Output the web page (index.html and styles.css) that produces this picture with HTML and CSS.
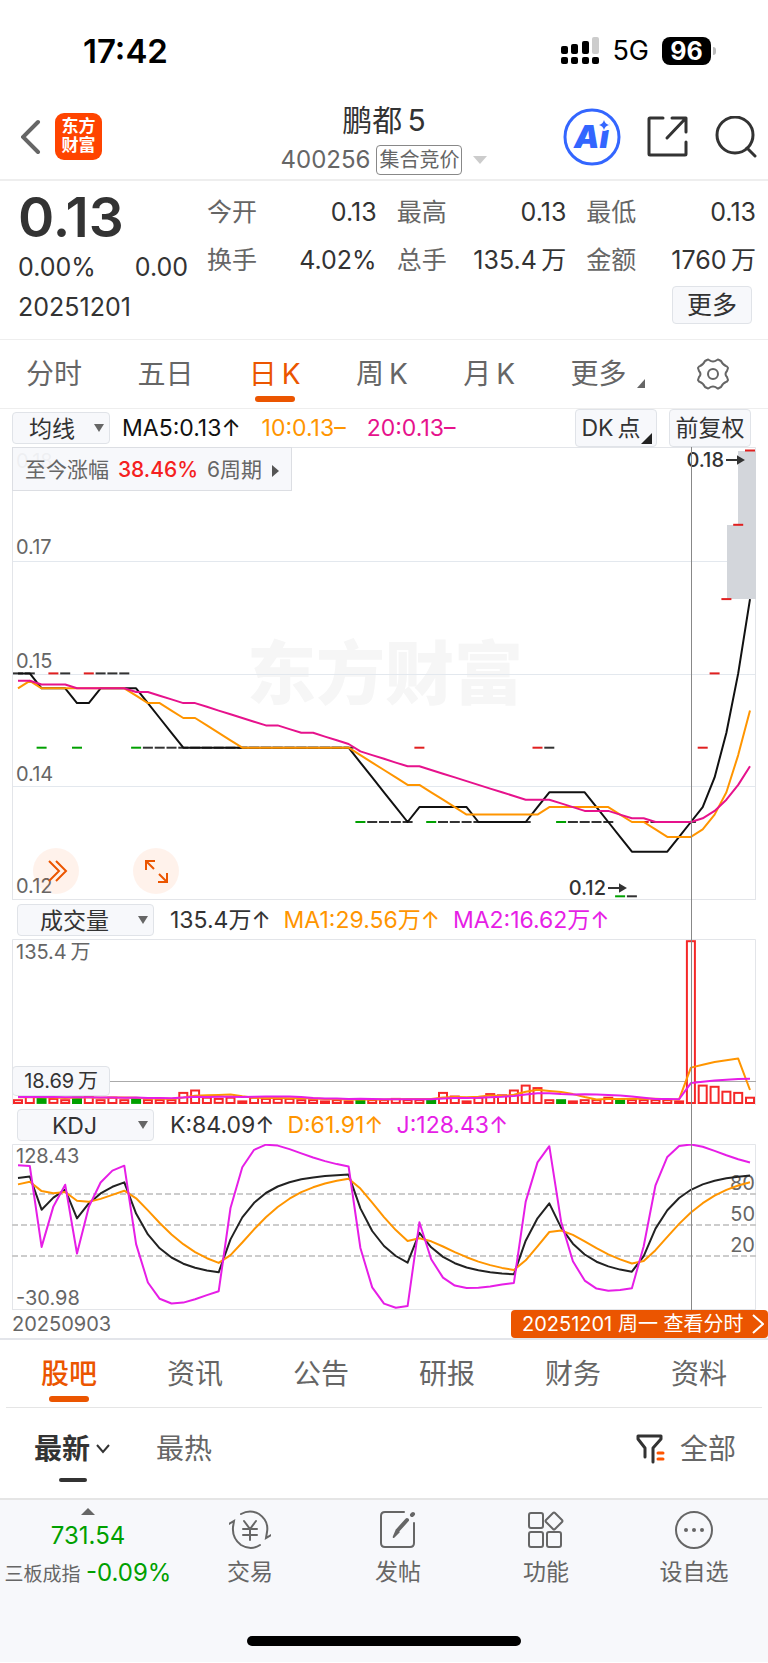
FILE: index.html
```
<!DOCTYPE html>
<html lang="zh-CN">
<head>
  <meta charset="UTF-8">
  <meta name="viewport" content="width=device-width, initial-scale=1">
  <title>鹏都5 400256</title>
  <link rel="stylesheet" href="styles.css">
</head>
<body>

  <div class="status-bar">
    <span class="clock">17:42</span>
    <div class="status-right">
      <svg class="signal" width="40" height="28" viewBox="0 0 40 28">
        <g fill="#000">
          <rect x="1" y="9" width="7" height="8" rx="2"/>
          <rect x="11" y="7" width="7" height="10" rx="2"/>
          <rect x="22" y="4" width="7" height="13" rx="2"/>
          <rect x="1" y="20" width="7" height="7" rx="2"/>
          <rect x="11" y="20" width="7" height="7" rx="2"/>
          <rect x="22" y="20" width="7" height="7" rx="2"/>
          <rect x="32" y="20" width="7" height="7" rx="2"/>
        </g>
        <rect x="32" y="0" width="7" height="17" rx="2" fill="#ccc"/>
      </svg>
      <span class="network">5G</span>
      <span class="battery">96</span>
    </div>
  </div>

  <header class="top">
    <div class="top-left">
      <button class="icon-btn" aria-label="返回">
        <svg width="20" height="36" viewBox="0 0 20 36" fill="none" stroke="#666" stroke-width="4" stroke-linecap="round"><path d="M17 3 2 18l15 15"/></svg>
      </button>
      <a class="logo" href="#">东方<br>财富</a>
    </div>
    <div class="title">
      <h1>鹏都&thinsp;5</h1>
      <div class="code">
        <span>400256</span>
        <span class="tag">集合竞价</span>
        <i class="caret"></i>
      </div>
    </div>
    <div class="top-right">
      <button class="icon-btn" aria-label="AI">
        <svg width="58" height="58" viewBox="0 0 58 58">
          <circle cx="29" cy="29" r="27" fill="#fff" stroke="#36f" stroke-width="3"/>
          <text class="ai" x="11" y="40">Ai</text>
          <circle cx="41" cy="17" r="6" fill="#fff"/>
          <path d="M41 12q1 4 5 5q-4 1-5 5q-1-4-5-5q4-1 5-5z" fill="#36f"/>
        </svg>
      </button>
      <button class="icon-btn" aria-label="分享">
        <svg width="42" height="42" viewBox="0 0 42 42" fill="none" stroke="#333" stroke-width="3" stroke-linecap="round" stroke-linejoin="round"><path d="M16 2H3q-1 0-1 1v35q0 1 1 1h35q1 0 1-1V26M25 2h14v14M38 3 20 22"/></svg>
      </button>
      <button class="icon-btn" aria-label="搜索">
        <svg width="42" height="42" viewBox="0 0 42 42" fill="none" stroke="#333" stroke-width="3" stroke-linecap="round"><circle cx="20" cy="19" r="18"/><path d="m32 32 8 8"/></svg>
      </button>
    </div>
  </header>

  <section class="quote">
    <div class="price">
      <strong>0.13</strong>
      <div class="change"><span>0.00%</span><span>0.00</span></div>
      <div class="date">20251201</div>
    </div>
    <div class="quote-detail">
      <dl class="stats">
        <div><dt>今开</dt><dd>0.13</dd></div>
        <div><dt>最高</dt><dd>0.13</dd></div>
        <div><dt>最低</dt><dd>0.13</dd></div>
        <div><dt>换手</dt><dd>4.02%</dd></div>
        <div><dt>总手</dt><dd>135.4&thinsp;万</dd></div>
        <div><dt>金额</dt><dd>1760&thinsp;万</dd></div>
      </dl>
      <button class="box-btn more">更多</button>
    </div>
  </section>

  <nav class="periods">
    <a href="#">分时</a>
    <a href="#">五日</a>
    <a href="#" class="active">日&thinsp;K</a>
    <a href="#">周&thinsp;K</a>
    <a href="#">月&thinsp;K</a>
    <a href="#" class="corner">更多</a>
    <button class="icon-btn" aria-label="设置">
      <svg width="34" height="34" viewBox="0 0 34 34" fill="none" stroke="#666" stroke-width="2" stroke-linejoin="round">
        <path d="M11 3q1-1 2 0q4 3 8 0q1-1 2 0l2 1q2 4 5 5q1 0 2 2l-1 3q-3 3 0 6l1 3q-1 2-2 2q-3 1-5 5l-2 1q-1 1-2 0q-4-3-8 0q-1 1-2 0l-2-1q-2-4-5-5q-1 0-2-2l1-3q3-3 0-6l-1-3q1-2 2-2q3-1 5-5z"/>
        <circle cx="17" cy="17" r="5"/>
      </svg>
    </button>
  </nav>

  <main class="charts">
    <div class="ind-row ma-row">
      <label class="pick"><select aria-label="主图指标"><option>均线</option><option>BOLL</option></select></label>
      <span class="c-black">MA5:0.13↑</span>
      <span class="c-orange">10:0.13–</span>
      <span class="c-pink">20:0.13–</span>
      <div class="ma-buttons">
        <button class="box-btn dk">DK&thinsp;点</button>
        <button class="box-btn">前复权</button>
      </div>
    </div>

    <div class="panel">
      <svg viewBox="0 0 744 453">
        <text class="watermark" x="235" y="252">东方财富</text>
        <path class="grid" d="M0 114.5h744M0 227.5h744M0 339.5h744"/>
        <path class="frame" d="M.5 453V.5h743V453"/>
        <path class="frame" d="M0 452.5h744"/>
        <text class="axis" x="4" y="21">0.18</text>
        <text class="axis" x="4" y="107">0.17</text>
        <text class="axis" x="4" y="221">0.15</text>
        <text class="axis" x="4" y="334">0.14</text>
        <text class="axis" x="4" y="446">0.12</text>
        <path fill="#d3d6db" d="M726 4h18v148h-29V78h11z"/>
        <g id="kline"></g>
        <text class="mark" x="712" y="20" text-anchor="end">0.18</text>
        <path class="arrow" d="M714 13h12m0-3 5 3-5 3z"/>
        <text class="mark" x="594" y="448" text-anchor="end">0.12</text>
        <path class="arrow" d="M596 441h12m0-3 5 3-5 3z"/>
      </svg>
      <a class="gain" href="#">至今涨幅 <b>38.46%</b> 6周期 <i></i></a>
      <div class="float-buttons">
        <button aria-label="展开">
          <svg width="46" height="46" viewBox="0 0 46 46" fill="none" stroke="#eb5500" stroke-width="2"><path d="m16 13 10 10-10 10M23 13l10 10-10 10"/></svg>
        </button>
        <button aria-label="全屏">
          <svg width="46" height="46" viewBox="0 0 46 46" fill="none" stroke="#eb5500" stroke-width="2"><path d="M13 22v-9h9M13 13l8 8M34 25v9h-9M34 34l-8-8"/></svg>
        </button>
      </div>
    </div>

    <div class="ind-row">
      <label class="pick wide"><select aria-label="副图指标一"><option>成交量</option><option>MACD</option></select></label>
      <span class="c-dark">135.4万↑</span>
      <span class="c-orange">MA1:29.56万↑</span>
      <span class="c-violet">MA2:16.62万↑</span>
    </div>

    <div class="panel">
      <svg viewBox="0 0 744 166">
        <path class="frame" d="M.5 166V.5h743V166"/>
        <text class="axis" x="4" y="20">135.4&#8201;万</text>
        <path stroke="#aaa" d="M0 142.5h744"/>
        <g id="volume"></g>
      </svg>
      <span class="vol-tip">18.69&thinsp;万</span>
    </div>

    <div class="ind-row">
      <label class="pick wide"><select aria-label="副图指标二"><option>KDJ</option><option>RSI</option></select></label>
      <span class="c-dark">K:84.09↑</span>
      <span class="c-orange">D:61.91↑</span>
      <span class="c-violet">J:128.43↑</span>
    </div>

    <div class="panel">
      <svg viewBox="0 0 744 166">
        <path class="frame" d="M.5 166V.5h743V166"/>
        <path class="frame" d="M0 165.5h744"/>
        <path stroke="#ccc" stroke-width="2" stroke-dasharray="6 3" d="M0 50h744M0 81h744M0 112h744"/>
        <text class="axis" x="4" y="19">128.43</text>
        <text class="axis" x="4" y="161">-30.98</text>
        <text class="axis" x="743" y="46" text-anchor="end">80</text>
        <text class="axis" x="743" y="77" text-anchor="end">50</text>
        <text class="axis" x="743" y="108" text-anchor="end">20</text>
        <g id="kdj"></g>
      </svg>
    </div>

    <div class="crosshair"></div>
  </main>

  <div class="range">
    <span>20250903</span>
    <a href="#">20251201 周一 查看分时
      <svg width="12" height="20" viewBox="0 0 12 20" fill="none" stroke="#fff" stroke-width="2"><path d="m1 1 10 9-10 9"/></svg>
    </a>
  </div>

  <nav class="sections">
    <a href="#" class="active">股吧</a>
    <a href="#">资讯</a>
    <a href="#">公告</a>
    <a href="#">研报</a>
    <a href="#">财务</a>
    <a href="#">资料</a>
  </nav>

  <div class="sort">
    <a href="#" class="active">最新<svg width="14" height="10" viewBox="0 0 14 10" fill="none" stroke="#333" stroke-width="2"><path d="m1 1 6 7 6-7"/></svg></a>
    <a href="#">最热</a>
    <button class="filter">
      <svg width="30" height="30" viewBox="0 0 30 30" fill="none" stroke="#333" stroke-width="3" stroke-linecap="round" stroke-linejoin="round">
        <path d="M9 23v-9L2 5V2h23v3l-8 9v14"/>
        <path stroke="#f50" d="M22 19h5M22 25h5"/>
      </svg>
      全部
    </button>
  </div>

  <footer class="bottom">
    <div class="bottom-items">
      <a class="index" href="#">
        <i class="up"></i>
        <b>731.54</b>
        <span>三板成指 <em>-0.09%</em></span>
      </a>
      <a href="#">
        <svg width="42" height="42" viewBox="0 0 42 42" fill="none" stroke="#666" stroke-width="2" stroke-linecap="round">
          <path d="M12 5q9-5 18 0q10 7 8 18l-1 6 5-3M31 36q-9 6-19 0Q3 29 4 18l1-6-5 3"/>
          <path d="m15 12 6 8 6-8M21 20v11M14 20h14M14 26h14"/>
        </svg>
        交易
      </a>
      <a href="#">
        <svg width="42" height="42" viewBox="0 0 42 42" fill="none" stroke="#666" stroke-width="2" stroke-linecap="round">
          <path d="M27 3H8Q4 3 4 7v27q0 4 4 4h25q4 0 4-4V14"/>
          <path stroke-width="4" d="M30 11 21 21M35 6l1-1"/>
          <path fill="#666" stroke="none" d="m19 20 4 3-6 6q-2 0-1-2z"/>
        </svg>
        发帖
      </a>
      <a href="#">
        <svg width="42" height="42" viewBox="0 0 42 42" fill="none" stroke="#666" stroke-width="2" stroke-linejoin="round">
          <rect x="4" y="4" width="14" height="15" rx="2"/>
          <rect x="4" y="23" width="14" height="15" rx="2"/>
          <rect x="22" y="23" width="14" height="15" rx="2"/>
          <path d="m28 4q1-1 2 0l7 7q1 1 0 2l-7 7q-1 1-2 0l-7-7q-1-1 0-2z"/>
        </svg>
        功能
      </a>
      <a href="#">
        <svg width="42" height="42" viewBox="0 0 42 42" fill="none" stroke="#666" stroke-width="2">
          <circle cx="21" cy="21" r="18"/>
          <g fill="#666" stroke="none"><circle cx="13" cy="21" r="2"/><circle cx="21" cy="21" r="2"/><circle cx="29" cy="21" r="2"/></g>
        </svg>
        设自选
      </a>
    </div>
    <div class="home-bar"></div>
  </footer>

  <script>
    const HISTORY = 20;   // bars before the visible range, only used for the averages
    const STEP    = 11.806;
    const RED = '#e02020', GREEN = '#00a000', BLACK = '#333';
    const ORANGE = '#ff9500', PINK = '#e6128c', VIOLET = '#e61ee6';

    // Closing price in cents, oldest first
    const closes = [
      ...run(15, 11), 14, ...run(15, 3), 14, ...run(15, 4),
      15, 15, 14, 15, 15, 14, ...run(15, 4),
      ...run(14, 19), ...run(13, 5), 14, ...run(13, 9),
      14, 14, ...run(13, 5), 12, 12, ...run(13, 5),
      14, 15, 16, 17, 18
    ];

    // Volume, in 万
    const volumes = [
      ...run(6, HISTORY),
      4, 7, 5, 5, 4, 6, 7, 4, 6, 4, 5, 4, 4, 4, 10, 12, 6, 5, 6, 3, 6, 5, 5, 5, 4, 4, 3, 4, 3, 4, 4,
      4, 5, 4, 4, 4, 10, 7, 3, 6, 9, 8, 12, 16, 14, 4, 4, 3, 4, 4, 6, 4, 4, 4, 4, 4, 3,
      135.4, 16, 15, 11, 10, 6
    ];

    function run(value, n) {
      return Array(n).fill(value);
    }

    function x(i) {
      return 6 + i * STEP;
    }

    function average(data, n) {
      const out = [];
      for (let i = HISTORY; i < data.length; i++) {
        const part = data.slice(i - n + 1, i + 1);
        out.push(part.reduce((a, b) => a + b) / n);
      }
      return out;
    }

    function line(values, y, color) {
      const points = values.map((v, i) => x(i).toFixed(1) + ',' + y(v).toFixed(1)).join(' ');
      return `<polyline points="${points}" fill="none" stroke="${color}" stroke-width="2" stroke-linejoin="round"/>`;
    }

    // Each bar opens and closes at one price, so it is drawn as a dash
    function drawKline() {
      const y = cents => 375 - (cents - 13) * 74.3;
      let svg = '';
      for (let i = 0; i < closes.length - HISTORY; i++) {
        const diff = closes[i + HISTORY] - closes[i + HISTORY - 1];
        const color = diff > 0 ? RED : diff < 0 ? GREEN : BLACK;
        svg += `<rect x="${(x(i) - 5).toFixed(1)}" y="${(y(closes[i + HISTORY]) - 1).toFixed(1)}" width="10" height="2" fill="${color}"/>`;
      }
      svg += line(average(closes, 5), y, '#111');
      svg += line(average(closes, 10), y, ORANGE);
      svg += line(average(closes, 20), y, PINK);
      document.getElementById('kline').innerHTML = svg;
    }

    function drawVolume() {
      const y = v => 165 - v * 1.21;
      let svg = '';
      for (let i = 0; i < volumes.length - HISTORY; i++) {
        const v = volumes[i + HISTORY];
        const down = closes[i + HISTORY] < closes[i + HISTORY - 1];
        const color = down ? '#00a000' : '#f52828';
        svg += `<rect x="${(x(i) - 4).toFixed(1)}" y="${(y(v) + 1).toFixed(1)}" width="8" height="${(v * 1.21 - 2).toFixed(1)}" fill="${down ? color : '#fff'}" stroke="${color}" stroke-width="2"/>`;
      }
      svg += line(average(volumes, 5), y, ORANGE);
      svg += line(average(volumes, 10), y, VIOLET);
      document.getElementById('volume').innerHTML = svg;
    }

    function drawKdj() {
      const y = v => 50 - (v - 80) * 1.025;
      const K = [95.6], D = [89.4], J = [108];
      for (let i = HISTORY + 1; i < closes.length; i++) {
        const part = closes.slice(i - 8, i + 1);
        const low = Math.min(...part), high = Math.max(...part);
        const rsv = high === low ? 100 : (closes[i] - low) / (high - low) * 100;
        const k = K[K.length - 1] * 2 / 3 + rsv / 3;
        const d = D[D.length - 1] * 2 / 3 + k / 3;
        K.push(k);
        D.push(d);
        J.push(3 * k - 2 * d);
      }
      document.getElementById('kdj').innerHTML = line(K, y, '#222') + line(D, y, ORANGE) + line(J, y, VIOLET);
    }

    drawKline();
    drawVolume();
    drawKdj();
  </script>
</body>
</html>
```
FILE: styles.css
```
* {
  box-sizing: border-box;
}
body {
  margin: 0;
  background: #fff;
  color: #333;
  font-family: Inter, "Noto Sans CJK SC", sans-serif;
  font-size: 25px;
  line-height: 32px;
}
a {
  color: inherit;
  text-decoration: none;
}
button, select {
  font: inherit;
  color: inherit;
  margin: 0;
  padding: 0;
  border: 0;
  background: none;
}
svg {
  display: block;
}
.icon-btn {
  display: flex;
}

/* status bar */
.status-bar {
  display: flex;
  justify-content: space-between;
  align-items: center;
  height: 94px;
  padding: 8px 57px 0 83px;
  color: #000;
}
.clock {
  font-size: 33px;
  font-weight: 600;
}
.status-right {
  display: flex;
  align-items: center;
}
.signal {
  margin-right: 12px;
}
.network {
  margin-right: 13px;
  font-size: 27px;
}
.battery {
  position: relative;
  width: 49px;
  height: 28px;
  border-radius: 8px;
  background: #000;
  color: #fff;
  font-weight: 700;
  line-height: 28px;
  text-align: center;
}
.battery::after {
  content: "";
  position: absolute;
  left: 51px;
  top: 10px;
  width: 3px;
  height: 8px;
  border-radius: 0 4px 4px 0;
  background: #bbb;
}

/* header */
.top {
  display: grid;
  grid-template-columns: 1fr auto 1fr;
  align-items: center;
  height: 87px;
  padding: 0 11px;
  border-bottom: 2px solid #eee;
}
.top-left, .top-right {
  display: flex;
  align-items: center;
}
.top-left {
  gap: 14px;
  padding-left: 10px;
}
.top-right {
  justify-content: flex-end;
  gap: 26px;
}
.logo {
  width: 47px;
  height: 47px;
  padding: 4px 0;
  border-radius: 9px;
  background: #ff4400;
  color: #fff;
  font-size: 17px;
  font-weight: 700;
  line-height: 19px;
  text-align: center;
}
.title {
  text-align: center;
}
.title h1 {
  margin: 0;
  font-size: 30px;
  font-weight: 400;
  line-height: 44px;
}
.code {
  display: flex;
  align-items: center;
  gap: 6px;
  padding-top: 2px;
  color: #666;
  font-size: 24px;
}
.tag {
  padding: 0 2px;
  border: 1px solid #888;
  border-radius: 4px;
  font-size: 20px;
  line-height: 28px;
}
.caret {
  margin-left: 5px;
  border: 7px solid transparent;
  border-top: 8px solid #ccc;
  border-bottom: 0;
}
.ai {
  fill: #36f;
  font-size: 32px;
  font-style: italic;
  font-weight: 900;
}

/* quote */
.quote {
  display: flex;
  gap: 19px;
  height: 159px;
  padding: 7px 12px 0 18px;
  border-bottom: 1px solid #eee;
}
.price {
  width: 170px;
}
.price strong {
  display: block;
  font-size: 55px;
  font-weight: 600;
  line-height: 58px;
}
.change {
  display: flex;
  justify-content: space-between;
  line-height: 42px;
}
.date {
  line-height: 38px;
}
.quote-detail {
  flex: 1;
}
.stats {
  display: grid;
  grid-template-columns: repeat(3, 1fr);
  column-gap: 20px;
  margin: 0;
  line-height: 48px;
}
.stats div {
  display: flex;
  justify-content: space-between;
}
.stats dt {
  color: #666;
}
.stats dd {
  margin: 0;
}
.box-btn {
  height: 38px;
  border: 1px solid #e0e3e8;
  border-radius: 4px;
  background: #f7f8fb;
}
.more {
  display: block;
  width: 80px;
  margin: 2px 4px 0 auto;
}

/* period tabs */
.periods {
  display: flex;
  justify-content: space-between;
  align-items: center;
  height: 69px;
  padding: 0 38px 0 26px;
  border-bottom: 1px solid #eee;
  color: #666;
  font-size: 28px;
}
.periods a, .sections a, .sort a {
  position: relative;
}
.active {
  color: #eb5500;
}
.periods .active::after, .sections .active::after {
  content: "";
  position: absolute;
  left: 50%;
  bottom: -12px;
  width: 40px;
  height: 6px;
  margin-left: -20px;
  border-radius: 3px;
  background: #eb5500;
}
.corner {
  margin-right: 14px;
}
.corner::after, .dk::after {
  content: "";
  position: absolute;
  right: -18px;
  bottom: 2px;
  border-left: 8px solid transparent;
  border-bottom: 9px solid #666;
}

/* charts */
.charts {
  position: relative;
  padding: 0 12px;
}
.ind-row {
  display: flex;
  align-items: center;
  gap: 13px;
  height: 39px;
  padding-left: 5px;
  font-size: 23px;
}
.ma-row {
  gap: 21px;
  height: 38px;
  padding-left: 0;
}
.pick {
  position: relative;
  margin-right: 3px;
}
.pick select {
  appearance: none;
  display: block;
  width: 98px;
  height: 32px;
  padding-right: 18px;
  border: 1px solid #e0e3e8;
  border-radius: 4px;
  background: #f7f8fb;
  text-align-last: center;
}
.pick.wide select {
  width: 137px;
  padding-right: 22px;
}
.pick::after {
  content: "";
  position: absolute;
  right: 6px;
  top: 12px;
  border: 5px solid transparent;
  border-top: 8px solid #666;
  border-bottom: 0;
}
.ma-row .pick {
  margin-right: -9px;
}
.ma-buttons {
  display: flex;
  gap: 12px;
  margin: 0 5px 0 auto;
}
.ma-buttons .box-btn {
  position: relative;
  width: 82px;
}
.ma-buttons .dk {
  padding-right: 10px;
}
.dk::after {
  right: 4px;
  border-left-width: 11px;
  border-bottom: 11px solid #222;
}
.c-black {
  color: #111;
}
.c-dark {
  color: #333;
}
.c-orange {
  color: #ff9500;
}
.c-pink {
  color: #e6128c;
}
.c-violet {
  color: #e61ee6;
}
.panel {
  position: relative;
}
.panel > svg {
  width: 100%;
  height: auto;
}
.frame {
  fill: none;
  stroke: #e3e5e9;
}
.grid {
  stroke: #e3e8ee;
  stroke-width: 1;
}
.axis {
  fill: #666;
  font-size: 20px;
}
.mark {
  fill: #333;
  font-size: 20px;
  font-weight: 500;
}
.arrow {
  fill: #333;
  stroke: #333;
  stroke-width: 2;
}
.watermark {
  fill: #f6f6f6;
  font-size: 69px;
  font-weight: 900;
}
.gain {
  position: absolute;
  left: 0;
  top: 0;
  height: 44px;
  padding: 0 12px;
  border: 1px solid #dcdee3;
  background: rgba(247, 248, 251, 0.94);
  color: #666;
  font-size: 21px;
  line-height: 44px;
}
.gain b {
  margin: 0 3px;
  color: #f52020;
  font-weight: 500;
}
.gain i {
  display: inline-block;
  margin-left: 4px;
  border: 6px solid transparent;
  border-left: 7px solid #555;
  border-right: 0;
}
.float-buttons {
  position: absolute;
  left: 21px;
  bottom: 6px;
  display: flex;
  gap: 54px;
}
.float-buttons button {
  border-radius: 50%;
  background: rgba(255, 85, 0, 0.08);
}
.vol-tip {
  position: absolute;
  left: 0;
  bottom: 9px;
  width: 98px;
  border: 1px solid #e0e3e8;
  border-radius: 4px;
  background: #f7f8fb;
  font-size: 20px;
  line-height: 28px;
  text-align: center;
}
.crosshair {
  position: absolute;
  left: 90%;
  top: 38px;
  bottom: 0;
  width: 1px;
  background: #888;
}
.range {
  display: flex;
  justify-content: space-between;
  height: 30px;
  padding-left: 12px;
  border-bottom: 2px solid #e3e5ea;
  color: #666;
  font-size: 20px;
  line-height: 28px;
}
.range a {
  display: flex;
  align-items: center;
  justify-content: space-between;
  width: 257px;
  padding: 0 4px 0 11px;
  border-radius: 4px;
  background: #eb5500;
  color: #fff;
  white-space: nowrap;
}

/* stock sections */
.sections {
  display: grid;
  grid-template-columns: repeat(6, 1fr);
  align-items: center;
  height: 68px;
  margin: 0 6px;
  border-bottom: 1px solid #e5e5e5;
  color: #666;
  font-size: 28px;
  text-align: center;
}
.sections .active {
  color: #eb5500;
  font-weight: 500;
}
.sort {
  display: flex;
  align-items: center;
  gap: 46px;
  height: 90px;
  padding: 0 32px 9px 34px;
  color: #666;
  font-size: 28px;
}
.sort .active {
  display: flex;
  align-items: center;
  gap: 6px;
  color: #333;
  font-weight: 700;
}
.sort .active::after {
  content: "";
  position: absolute;
  left: 25px;
  bottom: -17px;
  width: 28px;
  height: 4px;
  border-radius: 2px;
  background: #333;
}
.filter {
  display: flex;
  align-items: center;
  gap: 14px;
  margin-left: auto;
}

/* bottom bar */
.bottom {
  padding-bottom: 16px;
  border-top: 2px solid #e5e5e5;
  background: #f7f8fb;
}
.bottom-items {
  display: grid;
  grid-template-columns: 176px repeat(4, 1fr);
  height: 136px;
}
.bottom-items a {
  display: flex;
  flex-direction: column;
  align-items: center;
  gap: 5px;
  padding-top: 9px;
  color: #666;
  font-size: 23px;
}
.bottom-items .index {
  padding-top: 8px;
  font-size: 19px;
  white-space: nowrap;
}
.index b, .index em {
  color: #00a000;
  font-size: 24px;
  font-style: normal;
  font-weight: 400;
}
.up {
  border: 7px solid transparent;
  border-top: 0;
  border-bottom: 7px solid #666;
}
.home-bar {
  width: 274px;
  height: 10px;
  margin: 0 auto;
  border-radius: 5px;
  background: #000;
}
```
